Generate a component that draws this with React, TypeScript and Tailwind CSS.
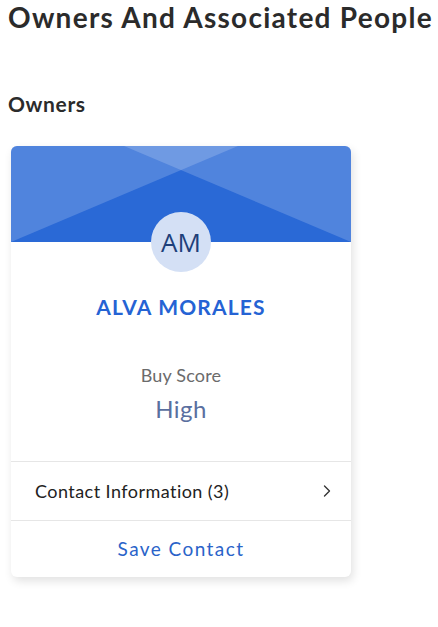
import { ChevronRight } from "lucide-react";

function CardHeader() {
  return (
    <div className="relative h-[96px] bg-[#2a69d6] rounded-t-[6px] overflow-hidden">
      <svg
        className="absolute inset-0 w-full h-full"
        viewBox="0 0 340 96"
        preserveAspectRatio="none"
      >
        <polygon points="0,0 227,0 0,96" fill="#ffffff" fillOpacity="0.18" />
        <polygon points="113,0 340,0 340,96" fill="#ffffff" fillOpacity="0.18" />
      </svg>
    </div>
  );
}

function OwnerCard() {
  return (
    <div className="ml-[3px] w-[340px] bg-white rounded-[6px] shadow-[2px_4px_10px_rgba(0,0,0,0.12)]">
      <CardHeader />
      <div className="flex flex-col items-center">
        <div className="-mt-[30px] relative w-[60px] h-[60px] rounded-full bg-[#d4e0f5] flex items-center justify-center text-[26px] text-[#1e3f7a] font-['Open_Sans',sans-serif]">
          AM
        </div>
        <div className="mt-[21px] text-[21px] leading-[28px] font-bold text-[#2563d4] tracking-[0.055em]">
          ALVA MORALES
        </div>
        <div className="mt-[42px] text-[18px] leading-[24px] text-[#6b6b6b] tracking-[0.01em]">
          Buy Score
        </div>
        <div className="mt-[8px] text-[24px] leading-[28px] text-[#5a6fa0] tracking-[0.02em]">
          High
        </div>
      </div>
      <div className="mt-[38px] border-t border-[#e6e6e6] h-[59px] flex items-center justify-between pl-[24px] pr-[14px]">
        <span className="text-[18px] text-[#222] tracking-[0.025em]">Contact Information (3)</span>
        <ChevronRight className="w-[20px] h-[20px] text-[#333]" strokeWidth={1.6} />
      </div>
      <div className="border-t border-[#e6e6e6] h-[57px] flex items-center justify-center">
        <span className="text-[19px] text-[#2a63c9] tracking-[0.075em]">Save Contact</span>
      </div>
    </div>
  );
}

export default function App() {
  return (
    <div className="min-h-[627px] bg-white px-2 font-['Lato',sans-serif] text-[#2b2b2b]">
      <h1 className="text-[28px] leading-[34px] font-bold tracking-[0.045em] whitespace-nowrap">
        Owners And Associated People
      </h1>
      <h2 className="mt-[56px] text-[21px] leading-[28px] font-bold tracking-[0.03em]">
        Owners
      </h2>
      <div className="mt-[28px]">
        <OwnerCard />
      </div>
    </div>
  );
}
